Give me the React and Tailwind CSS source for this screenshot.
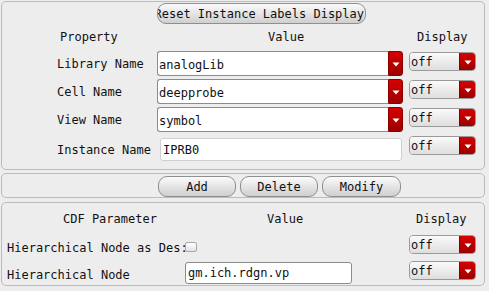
function Arrow() {
  return (
    <svg width="8" height="5" viewBox="0 0 8 5" className="mt-[2px]">
      <polygon points="0.5,0.5 7.5,0.5 4,4.5" fill="#ffffff" />
    </svg>
  )
}

function RedButton({ className }) {
  return (
    <div
      className={
        'flex items-center justify-center bg-gradient-to-b from-[#d80000] to-[#9c0000] border border-[#8a0000] ' +
        className
      }
    >
      <Arrow />
    </div>
  )
}

function Combo({ value }) {
  return (
    <div className="flex h-[25px] w-[246px]">
      <div className="flex-1 h-full bg-white border border-[#8c8c8c] border-r-0 rounded-l-[3px] flex items-center pl-[1px] pt-[2px]">
        {value}
      </div>
      <RedButton className="w-[15px] h-full rounded-r-[3px]" />
    </div>
  )
}

function DisplayDrop() {
  return (
    <div className="flex h-[19px] w-[67px] rounded-[4px] border border-[#9a9a9a] overflow-hidden">
      <div className="flex-1 flex items-center pl-[1px] bg-gradient-to-b from-[#fafafa] to-[#dedede]">off</div>
      <RedButton className="w-[16px] h-full border-0 border-l border-l-[#8a0000]" />
    </div>
  )
}

function PillButton({ children, className }) {
  return (
    <div
      className={
        'h-[21px] flex items-center justify-center rounded-[9px] border border-[#8f8f8f] bg-gradient-to-b from-[#fbfbfb] to-[#cfcfcf] overflow-hidden whitespace-nowrap ' +
        className
      }
    >
      {children}
    </div>
  )
}

function PropRow({ label, value, first }) {
  return (
    <div className={'flex items-start h-[25px] ' + (first ? 'mt-[6px]' : 'mt-[3px]')}>
      <div className="w-[155px] h-[25px] pl-[55px] pt-[1px] flex items-center whitespace-nowrap">{label}</div>
      <Combo value={value} />
      <div className="ml-[6px] mt-[1px]">
        <DisplayDrop />
      </div>
    </div>
  )
}

export default function App() {
  return (
    <div className="w-[489px] h-[291px] bg-[#ededed] pl-[1px] pt-[1px] font-['DejaVu_Sans_Mono',monospace] text-[12px] leading-[16px] text-[#111] overflow-hidden">
      {/* instance properties */}
      <div className="w-[484px] h-[169px] border border-[#bcbcbc] rounded-[5px] flex flex-col">
        <PillButton className="ml-[155px] mt-[1px] w-[209px] justify-end pr-[1px]">
          Reset Instance Labels Display
        </PillButton>
        <div className="flex mt-[5px] h-[16px]">
          <div className="ml-[58px] w-[208px]">Property</div>
          <div className="w-[149px]">Value</div>
          <div>Display</div>
        </div>
        <PropRow label="Library Name" value="analogLib" first />
        <PropRow label="Cell Name" value="deepprobe" />
        <PropRow label="View Name" value="symbol" />
        <div className="flex items-start mt-[4px]">
          <div className="w-[155px] h-[25px] pl-[55px] pt-[6px] whitespace-nowrap">Instance Name</div>
          <div className="ml-[3px] mt-[2px] w-[242px] h-[23px] bg-white border border-[#cfcfcf] rounded-[3px] flex items-center pl-[2px]">
            IPRB0
          </div>
          <div className="ml-[7px]">
            <DisplayDrop />
          </div>
        </div>
      </div>

      {/* actions */}
      <div className="mt-[3px] w-[484px] h-[25px] border border-[#bcbcbc] rounded-[5px] flex items-end gap-[4px] pl-[156px]">
        <PillButton className="w-[78px] h-[20px]">Add</PillButton>
        <PillButton className="w-[78px] h-[20px]">Delete</PillButton>
        <PillButton className="w-[79px] h-[20px]">Modify</PillButton>
      </div>

      {/* cdf parameters */}
      <div className="mt-[4px] w-[484px] h-[84px] border border-[#bcbcbc] rounded-[5px] flex flex-col">
        <div className="flex mt-[8px] h-[16px]">
          <div className="ml-[61px] w-[204px]">CDF Parameter</div>
          <div className="w-[149px]">Value</div>
          <div>Display</div>
        </div>
        <div className="flex items-start mt-[8px] h-[19px]">
          <div className="ml-[5px] w-[178px] mt-[5px] whitespace-nowrap">Hierarchical Node as Des:</div>
          <div className="mt-[7px] w-[12px] h-[10px] rounded-[2px] border border-[#a8a8a8] bg-gradient-to-b from-[#ffffff] to-[#e2e2e2]" />
          <div className="ml-[212px]">
            <DisplayDrop />
          </div>
        </div>
        <div className="flex items-start mt-[7px]">
          <div className="ml-[5px] w-[178px] mt-[6px] whitespace-nowrap">Hierarchical Node</div>
          <div className="mt-[1px] w-[167px] h-[22px] bg-white border border-[#8c8c8c] rounded-[3px] flex items-center pl-[2px]">
            gm.ich.rdgn.vp
          </div>
          <div className="ml-[57px]">
            <DisplayDrop />
          </div>
        </div>
      </div>
    </div>
  )
}
